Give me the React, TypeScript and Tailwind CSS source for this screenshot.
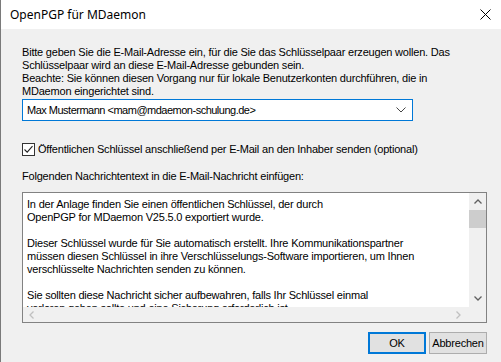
import React from "react";

function ChevronDown({ className }: { className?: string }) {
  return (
    <svg width="10" height="6" viewBox="0 0 10 6" className={className}>
      <path d="M0.5 0.5 L5 5 L9.5 0.5" fill="none" stroke="#444" strokeWidth="1" />
    </svg>
  );
}

export default function App() {
  const lines = [
    "In der Anlage finden Sie einen öffentlichen Schlüssel, der durch",
    "OpenPGP for MDaemon V25.5.0 exportiert wurde.",
    "",
    "Dieser Schlüssel wurde für Sie automatisch erstellt. Ihre Kommunikationspartner",
    "müssen diesen Schlüssel in ihre Verschlüsselungs-Software importieren, um Ihnen",
    "verschlüsselte Nachrichten senden zu können.",
    "",
    "Sie sollten diese Nachricht sicher aufbewahren, falls Ihr Schlüssel einmal",
    "verloren gehen sollte und eine Sicherung erforderlich ist.",
  ];
  return (
    <div className="w-[501px] h-[362px] flex flex-col overflow-hidden bg-[#f0f0f0] border-l border-[#7a7a7a] text-black font-['Liberation_Sans',Arial,sans-serif] text-[11px] leading-[13px] tracking-[-0.2px]">
      {/* Title bar */}
      <div className="h-[29px] bg-white flex items-center justify-between pl-[9px] pr-[10px] shrink-0 tracking-normal">
        <span className="font-['Noto_Sans',sans-serif] text-[12px] leading-[16px] text-black">OpenPGP für MDaemon</span>
        <svg width="11" height="11" viewBox="0 0 11 11">
          <path d="M0.5 0.5 L10.5 10.5 M10.5 0.5 L0.5 10.5" stroke="#000" strokeWidth="1" />
        </svg>
      </div>

      {/* Body */}
      <div className="flex flex-col pl-[21px] pr-[14px] pt-[17px]">
        <p className="w-[470px]">
          Bitte geben Sie die E-Mail-Adresse ein, für die Sie das Schlüsselpaar erzeugen wollen. Das
          <br />
          Schlüsselpaar wird an diese E-Mail-Adresse gebunden sein.
          <br />
          Beachte: Sie können diesen Vorgang nur für lokale Benutzerkonten durchführen, die in
          <br />
          MDaemon eingerichtet sind.
        </p>

        {/* Combo */}
        <div className="mt-[1px] w-[391px] h-[22px] bg-white border border-[#0078d7] flex items-center justify-between pl-[4px] pr-[6px]">
          <span className="tracking-[-0.5px]">Max Mustermann &lt;mam@mdaemon-schulung.de&gt;</span>
          <ChevronDown />
        </div>

        {/* Checkbox */}
        <div className="mt-[22px] flex items-center h-[13px]">
          <div className="w-[13px] h-[13px] bg-white border border-[#333] flex items-center justify-center">
            <svg width="11" height="11" viewBox="0 0 11 11">
              <path d="M1.5 5.5 L4.2 8.2 L9.5 2.2" fill="none" stroke="#222" strokeWidth="1.1" />
            </svg>
          </div>
          <span className="ml-[3px]">Öffentlichen Schlüssel anschließend per E-Mail an den Inhaber senden (optional)</span>
        </div>

        <div className="mt-[14px]">Folgenden Nachrichtentext in die E-Mail-Nachricht einfügen:</div>

        {/* Textarea */}
        <div className="mt-[9px] w-[465px] h-[131px] border border-[#828282] flex flex-col">
          <div className="flex h-[114px]">
            <div className="flex-1 bg-white pl-[4px] pt-[5px] overflow-hidden whitespace-pre">
              {lines.map((l, i) => (
                <div key={i} className="h-[13px]">{l}</div>
              ))}
            </div>
            <div className="w-[17px] bg-[#f0f0f0] flex flex-col items-center">
              <div className="h-[17px] flex items-center justify-center">
                <svg width="8" height="5" viewBox="0 0 8 5"><path d="M0.5 4.5 L4 1 L7.5 4.5" fill="none" stroke="#606060" strokeWidth="1.3" /></svg>
              </div>
              <div className="w-[17px] h-[18px] bg-[#cdcdcd]" />
              <div className="flex-1" />
              <div className="h-[17px] flex items-center justify-center">
                <svg width="8" height="5" viewBox="0 0 8 5"><path d="M0.5 0.5 L4 4 L7.5 0.5" fill="none" stroke="#606060" strokeWidth="1.3" /></svg>
              </div>
            </div>
          </div>
          <div className="flex-1 flex items-center justify-between bg-[#f0f0f0] pl-[6px] pr-[25px]">
            <svg width="5" height="8" viewBox="0 0 5 8"><path d="M4.5 0.5 L1 4 L4.5 7.5" fill="none" stroke="#c0c0c0" strokeWidth="1.3" /></svg>
            <svg width="5" height="8" viewBox="0 0 5 8"><path d="M0.5 0.5 L4 4 L0.5 7.5" fill="none" stroke="#c0c0c0" strokeWidth="1.3" /></svg>
          </div>
        </div>

        {/* Buttons */}
        <div className="mt-[9px] flex justify-end gap-[3px] w-[465px]">
          <button className="w-[58px] h-[22px] bg-[#e1e1e1] border-2 border-[#0078d7] flex items-center justify-center">OK</button>
          <button className="w-[58px] h-[22px] bg-[#e1e1e1] border border-[#adadad] flex items-center justify-center">Abbrechen</button>
        </div>
      </div>
    </div>
  );
}
